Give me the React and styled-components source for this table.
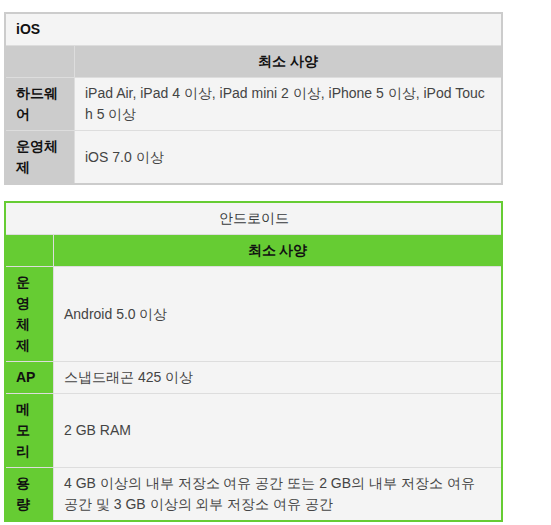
import React from "react";
import styled, { createGlobalStyle } from "styled-components";

const FONT = `"Liberation Sans", Arial, sans-serif`;

const Global = createGlobalStyle`
  html, body { margin: 0; padding: 0; background: #fff; }
  body { font-family: ${FONT}; font-size: 14px; }
`;

const Page = styled.div`
  padding: 12px 0 0 4px;
  display: flex;
  flex-direction: column;
  gap: 16px;
`;

const Table = styled.table`
  width: 499px;
  table-layout: fixed;
  border-collapse: separate;
  border-spacing: 0;
  border: 2px solid ${(p) => p.$accent};
  font-family: ${FONT};
  font-size: 14px;
  line-height: 21px;
  color: #444;
`;

const LabelCol = styled.col`
  width: ${(p) => p.$w}px;
`;

const Cell = styled.td`
  box-sizing: border-box;
  padding: 5px 14px 5px 10px;
  background: #f4f4f4;
  vertical-align: middle;
  word-break: break-all;
  border-bottom: ${(p) => (p.$last ? "none" : "1px solid #ddd")};
`;

const TitleCell = styled(Cell)`
  padding: 5px 10px;
  text-align: ${(p) => (p.$center ? "center" : "left")};
  font-weight: ${(p) => (p.$bold ? "bold" : "normal")};
  color: ${(p) => (p.$bold ? "#111" : "#373a3c")};
`;

const Label = styled.th`
  box-sizing: border-box;
  padding: 5px 10px;
  background: ${(p) => p.$bg};
  border-right: 1px solid #ddd;
  border-bottom: ${(p) => (p.$last ? "none" : "1px solid #ddd")};
  text-align: left;
  vertical-align: middle;
  font-weight: bold;
  color: #111;
  word-break: break-all;
`;

const HeadCell = styled(Cell)`
  padding: 5px 10px;
  background: ${(p) => p.$bg};
  text-align: center;
  font-weight: bold;
  color: #111;
`;

function SpecTable({ title, center, bold, accent, labelBg, labelW, rows }) {
  return (
    <Table $accent={accent}>
      <colgroup>
        <LabelCol $w={labelW} />
        <col />
      </colgroup>
      <tbody>
        <tr>
          <TitleCell colSpan={2} $center={center} $bold={bold}>
            {title}
          </TitleCell>
        </tr>
        <tr>
          <Label $bg={labelBg} />
          <HeadCell $bg={labelBg}>최소 사양</HeadCell>
        </tr>
        {rows.map(([k, v], i) => {
          const last = i === rows.length - 1;
          return (
            <tr key={k}>
              <Label $bg={labelBg} $last={last}>
                {k}
              </Label>
              <Cell $last={last}>{v}</Cell>
            </tr>
          );
        })}
      </tbody>
    </Table>
  );
}

export default function App() {
  return (
    <>
      <Global />
      <Page>
        <SpecTable
          title="iOS"
          bold
          accent="#cccccc"
          labelBg="#cccccc"
          labelW={69}
          rows={[
            [
              "하드웨어",
              "iPad Air, iPad 4 이상, iPad mini 2 이상, iPhone 5 이상, iPod Touch 5 이상",
            ],
            ["운영체제", "iOS 7.0 이상"],
          ]}
        />
        <SpecTable
          title="안드로이드"
          center
          accent="#66cc33"
          labelBg="#66cc33"
          labelW={48}
          rows={[
            ["운영체제", "Android 5.0 이상"],
            ["AP", "스냅드래곤 425 이상"],
            ["메모리", "2 GB RAM"],
            [
              "용량",
              "4 GB 이상의 내부 저장소 여유 공간 또는 2 GB의 내부 저장소 여유 공간 및 3 GB 이상의 외부 저장소 여유 공간",
            ],
          ]}
        />
      </Page>
    </>
  );
}
